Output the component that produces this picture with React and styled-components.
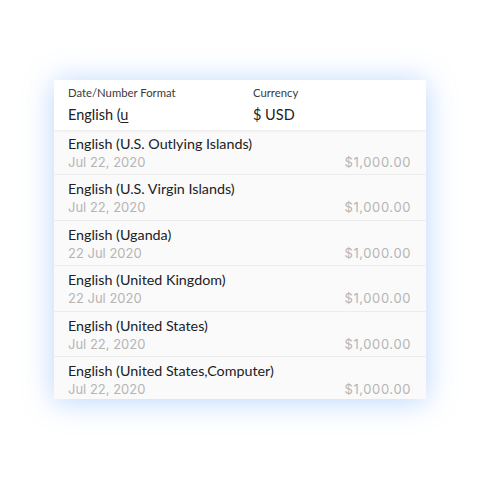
import React from "react";
import styled, { createGlobalStyle } from "styled-components";

const GlobalStyle = createGlobalStyle`
  html, body {
    margin: 0;
    padding: 0;
    background: #fff;
  }
  body {
    font-family: Lato, Roboto, "Liberation Sans", sans-serif;
  }
`;

const Page = styled.div`
  width: 480px;
  height: 480px;
  display: flex;
  justify-content: center;
  padding-top: 80px;
  box-sizing: border-box;
`;

const Card = styled.div`
  width: 372px;
  height: 319px;
  background: #fafafa;
  box-shadow: 0 2px 28px rgba(70, 145, 255, 0.38);
  display: flex;
  flex-direction: column;
  overflow: hidden;
`;

const Header = styled.div`
  height: 50px;
  flex-shrink: 0;
  background: #fff;
  display: grid;
  grid-template-columns: 185px 1fr;
  padding: 6px 14px 0;
  box-sizing: border-box;
  box-shadow: 0 1px 3px rgba(0, 0, 0, 0.07);
  position: relative;
  z-index: 1;
`;

const Field = styled.div`
  display: flex;
  flex-direction: column;
`;

const Label = styled.div`
  font-size: 11.3px;
  color: #3a3a3a;
  line-height: 14px;
`;

const Value = styled.div`
  font-size: 14.5px;
  color: #222;
  line-height: 20px;
  margin-top: 4.5px;
  u {
    text-decoration-thickness: 1px;
    text-underline-offset: 2px;
  }
`;

const List = styled.div`
  flex: 1;
  display: flex;
  flex-direction: column;
`;

const Row = styled.div`
  height: 45.4px;
  flex-shrink: 0;
  box-sizing: border-box;
  padding: 5px 15px 0 14px;
  border-bottom: 1px solid #ececec;
`;

const Name = styled.div`
  font-size: 14.3px;
  color: #202124;
  line-height: 18px;
`;

const Meta = styled.div`
  display: flex;
  justify-content: space-between;
  font-family: Inter, Roboto, sans-serif;
  font-size: 13px;
  line-height: 18px;
  color: #b5b5b5;
`;

const Amount = styled.span`
  letter-spacing: 0.6px;
`;

const rows = [
  { name: "English (U.S. Outlying Islands)", date: "Jul 22, 2020" },
  { name: "English (U.S. Virgin Islands)", date: "Jul 22, 2020" },
  { name: "English (Uganda)", date: "22 Jul 2020" },
  { name: "English (United Kingdom)", date: "22 Jul 2020" },
  { name: "English (United States)", date: "Jul 22, 2020" },
  { name: "English (United States,Computer)", date: "Jul 22, 2020" },
];

export default function App() {
  return (
    <>
      <GlobalStyle />
      <Page>
        <Card>
          <Header>
            <Field>
              <Label>Date/Number Format</Label>
              <Value>
                English (<u>u</u>
              </Value>
            </Field>
            <Field>
              <Label>Currency</Label>
              <Value>$ USD</Value>
            </Field>
          </Header>
          <List>
            {rows.map((r) => (
              <Row key={r.name}>
                <Name>{r.name}</Name>
                <Meta>
                  <span>{r.date}</span>
                  <Amount>$1,000.00</Amount>
                </Meta>
              </Row>
            ))}
          </List>
        </Card>
      </Page>
    </>
  );
}
